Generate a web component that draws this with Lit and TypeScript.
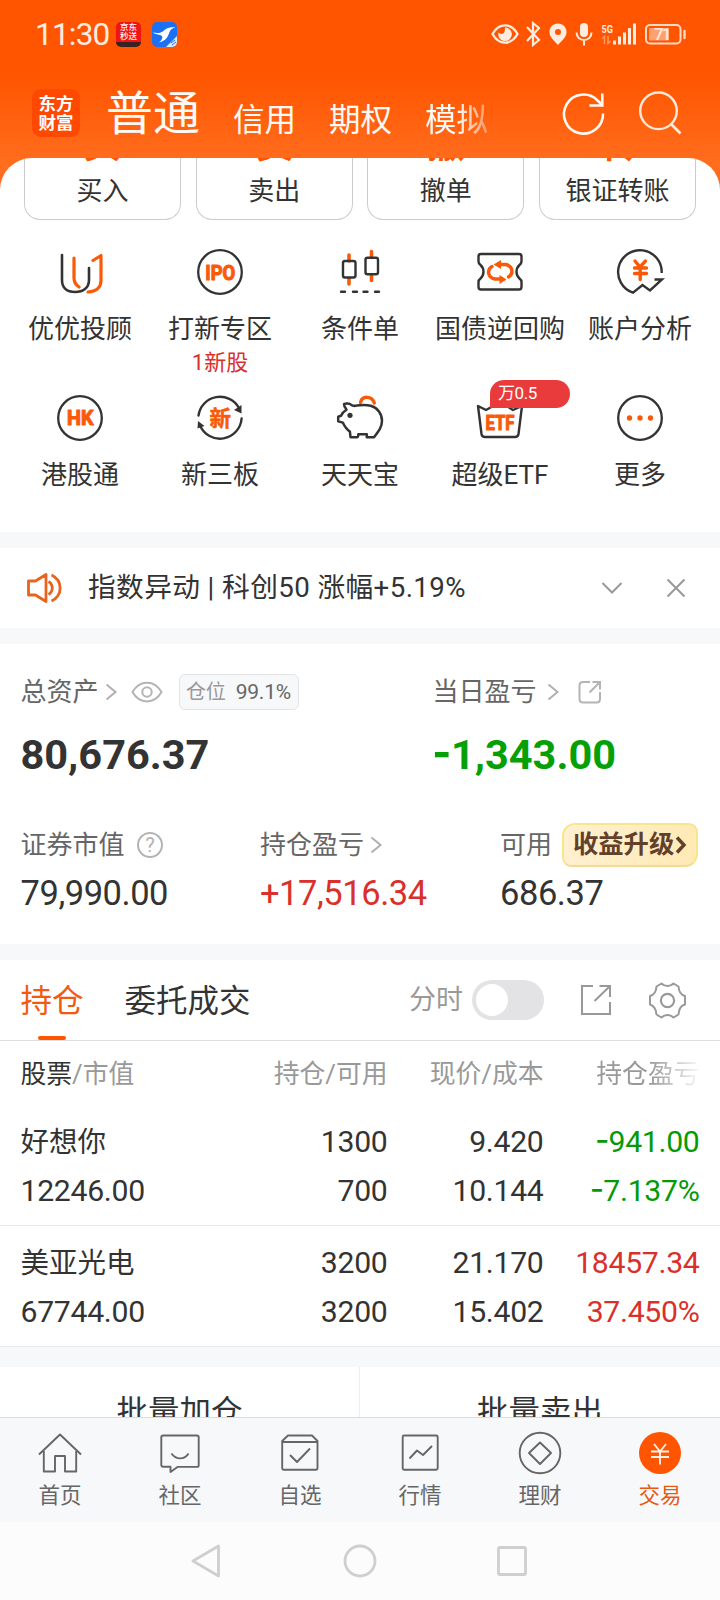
import { LitElement, html, svg, css } from "lit";
import { customElement } from "lit/decorators.js";

const icon = (w: number, h: number, body: unknown) =>
  html`<svg class="ic" width=${w} height=${h} viewBox="0 0 ${w} ${h}" fill="none">${body}</svg>`;

const D = "#333";
const O = "#fa5a08";
const G = "#999";

// Feature icons share a 50x50 canvas centred on (25,25).
const feature: Record<string, unknown> = {
  uu: svg`<g stroke-width="2.6" stroke-linecap="round" stroke-linejoin="round">
    <path stroke=${D} d="M7 8v25c0 8 5 12 13 12s14-4 14-12V21"/>
    <path stroke=${O} stroke-width="3.2" d="M19 11v20c0 4 2 7 5 9M38 13.5l8-5v25c0 7-5 11-13 11.5"/></g>`,
  ipo: svg`<circle cx="25" cy="25" r="21.8" stroke=${D} stroke-width="2.3"/>
    <text class="ib" x="25.3" y="32.5" font-size="20.5" textLength="30" lengthAdjust="spacingAndGlyphs">IPO</text>`,
  cond: svg`<path stroke=${O} stroke-width="3.6" stroke-linecap="round" d="M14 8v6M14 32v5M36.5 4.5v6M36.5 29v4.5"/>
    <g stroke=${D} stroke-width="2.4"><rect x="8" y="14" width="12.5" height="16.5" rx="2"/><rect x="30.5" y="10.8" width="12.5" height="16.5" rx="2"/>
    <path stroke-linecap="round" d="M6 44.8h4M18 44.8h4M28.5 44.8h4M40 44.8h4"/></g>`,
  bond: svg`<path stroke=${D} stroke-width="2.4" stroke-linejoin="round" d="M6 7h38q2.5 0 2.5 2.5v5q0 2-2 3.500c-4 3.500-4 10 0 13.500q2 1.500 2 3.500v5q0 2.500-2.500 2.500H6q-2.500 0-2.500-2.500v-5q0-2 2-3.500c4-3.500 4-10 0-13.500q-2-1.500-2-3.500v-5Q3.500 7 6 7z"/>
    <path stroke=${O} stroke-width="3.4" stroke-linecap="round" d="M17 19.500c-5 3-5 11 3 12.500h7M33.500 30c5-3 5-11-3-12.500h-6"/>
    <path fill=${O} d="M18.500 17.500l7.500-4.500v9zM31.500 32.500L24.500 28v9z"/>`,
  acct: svg`<path stroke=${D} stroke-width="2.4" stroke-linejoin="miter" d="M46.700 26A21.800 21.800 0 1 0 18 45.700L27.500 38l7.500 5.500L47 32.500h-7.500"/>
    <path stroke=${O} stroke-width="3.4" stroke-linecap="round" d="M20 14l5 6 5.500-6M25.200 20v12.500M19.500 21h12M19.500 26.500h12"/>`,
  hk: svg`<circle cx="25" cy="25" r="21.8" stroke=${D} stroke-width="2.3"/>
    <text class="ib" x="25.3" y="32.3" font-size="20" textLength="26.5" lengthAdjust="spacingAndGlyphs">HK</text>`,
  neeq: svg`<path stroke=${D} stroke-width="2.4" stroke-linecap="round" d="M3.500 22.500A21.700 21.700 0 0 1 44 15M46.600 25.500A21.700 21.700 0 0 1 5 32.500"/>
    <path fill=${D} d="M46.500 12v8.500l-7.500-3.500zM3 28l6.500 5L2.500 35.500z"/>
    <text class="ib cj" x="25.3" y="32.5" font-size="21.5">新</text>`,
  pig: svg`<path stroke=${O} stroke-width="3.4" stroke-linecap="round" d="M25.500 9.500c1.500-7 11.500-7 13.800.6"/>
    <path stroke=${D} stroke-width="2.500" stroke-linejoin="round" d="M9 11c2-1 5.500-.7 7 .7 1.500 1.300 3.500 1.400 5.700.9 4-.8 10-.9 14 .2 7 2 11.300 8 11.300 15 0 6-3 10-8 16.400h-7.200v-3h-8.500c0 2-.2 3-1.500 3h-6.300l-.6-5.600c-3-2-5.500-5.500-7.100-9l-4.600-1.300v-4.600l2.800-1c1.200-3 3-4.500 5.500-6-1.500-1.600-2.500-3.500-2.500-5.700z"/>
    <circle cx="15" cy="22.300" r="2.600" fill=${D}/>`,
  etf: svg`<path stroke=${D} stroke-width="2.4" stroke-linejoin="round" stroke-linecap="round" d="M15.500 14.500L11 17l-8-4 3.500 28q.5 3 3.500 3h30q3 0 3.500-3L47 13l-9 4-4-2.500"/>
    <text class="ib" x="25" y="36.700" font-size="20" textLength="29" lengthAdjust="spacingAndGlyphs">ETF</text>`,
  more: svg`<circle cx="25" cy="25" r="21.8" stroke=${D} stroke-width="2.3"/>
    <g fill=${O}><circle cx="14.5" cy="25" r="2.7"/><circle cx="25" cy="25" r="2.7"/><circle cx="35.5" cy="25" r="2.7"/></g>`,
};

const features = [
  ["uu", "优优投顾"], ["ipo", "打新专区", "1新股"], ["cond", "条件单"], ["bond", "国债逆回购"], ["acct", "账户分析"],
  ["hk", "港股通"], ["neeq", "新三板"], ["pig", "天天宝"], ["etf", "超级ETF", "", "万0.5"], ["more", "更多"],
];

const trades = [["买", "买入"], ["卖", "卖出"], ["撤", "撤单"], ["转", "银证转账"]];

const holdings = [
  { cls: "down", cells: [["好想你", "12246.00"], ["1300", "700"], ["9.420", "10.144"], ["-941.00", "-7.137%"]] },
  { cls: "up", cells: [["美亚光电", "67744.00"], ["3200", "3200"], ["21.170", "15.402"], ["18457.34", "37.450%"]] },
];

// Bottom navigation icons on a 44x44 canvas.
const tabs: [string, unknown][] = [
  ["首页", svg`<path d="M1 22.500L22 2.500l21 20M5.800 19v20.500H17V24h10v15.500h11.200V19"/>`],
  ["社区", svg`<path d="M5 3.500h34q1.700 0 1.700 1.700v28q0 1.700-1.700 1.700H19.500L12.500 40v-5.200H5q-1.700 0-1.700-1.700V5.200Q3.300 3.500 5 3.500zM13.500 21.500c4.500 6.500 13 6.500 17 0"/>`],
  ["自选", svg`<path d="M10 3.500h24l5.500 5.500v27q0 1.800-1.800 1.800H6Q4.200 37.800 4.200 36V9zM4.500 10h35M12 23l7 7 13-13.500"/>`],
  ["行情", svg`<rect x="4.700" y="3.500" width="35" height="34.300" rx="1.500"/><path d="M11.500 26.500l7.500-8 6 4.500 9-9"/>`],
  ["理财", svg`<circle cx="22" cy="21" r="20.300"/><path d="M22 10.500L33 21 22 32 11 21z"/>`],
  ["交易", svg`<circle cx="22" cy="21" r="21" fill="#ff5500" stroke="none"/><path stroke="#fff0e8" d="M16 12l6 7.500 6-7.500M22 19.500v13M13 19.500h18M13 25h18"/>`],
];

const sign = (t: string) => (t.startsWith("-") ? html`<i class="neg">-</i>${t.slice(1)}` : t);

const chevron = (cls: string) =>
  html`<span class=${cls}>${icon(12, 18, svg`<path stroke="#b0b0b0" stroke-width="2" d="M1.500 1.500L10.500 9l-9 7.500"/>`)}</span>`;

@customElement("app-root")
export class AppRoot extends LitElement {
  static styles = css`
    :host { display: block; width: 720px; height: 1600px; overflow: hidden; }
    * { box-sizing: border-box; }
    .app {
      height: 1600px; display: flex; flex-direction: column; color: #333; overflow: hidden; white-space: nowrap;
      font-family: Roboto, "Noto Sans CJK SC", sans-serif;
      background: linear-gradient(#ff5500 0, #ff5500 76px, #ff6c1c 158px, #ff7022 200px);
    }
    .ic { display: block; flex: none; overflow: visible; }
    .ib { font-family: Roboto, sans-serif; font-weight: 700; fill: #fa5a08; stroke: #fa5a08; stroke-width: 1.1px; stroke-linejoin: round; text-anchor: middle; }
    .ib.cj { font-family: "Noto Sans CJK SC", sans-serif; stroke-width: 0.5px; }

    .status { height: 68px; flex: none; display: flex; align-items: center; padding: 0 33px 0 35px; color: #ffece0; }
    .clock { font-size: 31.5px; line-height: 36px; letter-spacing: -0.8px; width: 81px; padding-top: 1px; }
    .chip { width: 25px; height: 25px; border-radius: 5px; overflow: hidden; }
    .jd { background: #f01414; color: #fff; font-size: 8.5px; line-height: 8.500px; text-align: center; font-weight: 500; padding-top: 1.5px; margin-right: 11px; border-bottom: 5px solid #3b2222; }
    .sys { margin-left: auto; }
    .st { font: 700 11.5px Roboto, sans-serif; fill: #ffece0; }
    .st.bat { font-size: 17px; font-weight: 500; }

    .head { height: 90px; flex: none; display: flex; align-items: center; padding-left: 32px; color: #fffaf5; }
    .logo { width: 48px; height: 48px; border-radius: 9px; background: #ff4800; color: #fff; font: 700 17.5px/19.5px "Noto Sans CJK SC", sans-serif; text-align: center; padding-top: 3.500px; margin-right: 26px; }
    .modes { display: flex; align-items: center; gap: 33px; font-size: 31.5px; line-height: 40px; width: 451px; }
    .modes b { font-size: 47px; font-weight: 400; line-height: 60px; padding-top: 2px; }
    .modes span { padding-top: 15px; }
    .fade { -webkit-mask-image: linear-gradient(90deg, #000 52%, rgba(0,0,0,.35) 100%); mask-image: linear-gradient(90deg, #000 52%, rgba(0,0,0,.35) 100%); }
    .acts { display: flex; gap: 31px; padding-left: 5px; }

    .sheet { background: #fff; border-radius: 32px 32px 0 0; height: 374px; flex: none; overflow: hidden; }
    .trades { display: grid; grid-template-columns: repeat(4, 157px); justify-content: space-between; padding: 0 24px; height: 62px; }
    .trade { height: 62px; border: 1.5px solid #ccc; border-top: 0; border-radius: 0 0 16px 16px; overflow: hidden; font-size: 26px; display: flex; flex-direction: column; justify-content: flex-end; align-items: center; line-height: 30px; padding-bottom: 13px; }
    .trade b { color: #ff5500; font-size: 38px; line-height: 44px; margin-bottom: 10px; }
    .grid { display: grid; grid-template-columns: repeat(5, 140px); grid-auto-rows: 146px; padding: 27px 10px 0; }
    .feat { display: flex; flex-direction: column; align-items: center; position: relative; font-size: 26px; line-height: 32px; }
    .feat .ic { margin-bottom: 16px; }
    .sub { font-size: 22px; line-height: 26px; margin-top: 5px; color: #d9302c; }
    .badge { position: absolute; left: 60px; top: -13px; width: 80px; height: 28px; border-radius: 14px 14px 14px 0; background: #ea3b3c; color: #fff; font-size: 17px; line-height: 27px; padding-left: 8px; letter-spacing: -0.4px; }

    .gap { height: 16px; flex: none; background: #f7f8fa; }
    .notice { height: 80px; flex: none; background: #fff; display: flex; align-items: center; padding: 0 34px 0 26px; }
    .notice p { margin: 0 auto 0 26px; font-size: 27.7px; line-height: 36px; letter-spacing: 0.4px; }
    .notice .x { margin-left: 43px; }

    .assets { height: 300px; flex: none; background: #fff; padding-left: 20.5px; color: #666; font-size: 26px; }
    .two { display: grid; grid-template-columns: 412px 1fr; padding-top: 26px; }
    .three { display: grid; grid-template-columns: 239.5px 240px 1fr; padding-top: 43px; }
    .lab { display: flex; align-items: center; height: 44px; line-height: 44px; }
    .two .big { font-size: 41.5px; font-weight: 700; color: #333; line-height: 50px; margin-top: 16px; }
    .val { font-size: 34.5px; color: #333; line-height: 40px; margin-top: 6px; letter-spacing: -0.45px; }
    .neg { font-family: "Noto Sans CJK SC", sans-serif; font-style: normal; font-size: 1.28em; line-height: 0; }
    .big .neg { font-size: 1.2em; }
    .down { color: #059a05; }
    .two .big.down { color: #05a005; }
    .up { color: #d9302c; }
    .c1 { margin-left: 6px; } .c2 { margin-left: 10px; }
    .eye { margin-left: 14px; } .out { margin-left: 19px; }
    .tag { margin-left: 16px; width: 120px; height: 36px; line-height: 34px; border: 1.5px solid #e4e4e6; border-radius: 6px; background: #f7f8fa; font-size: 20px; display: flex; align-items: center; justify-content: center; gap: 10px; color: #999; letter-spacing: -0.2px; }
    .tag span { color: #666; font-size: 21px; }
    .q { margin-left: 12px; }
    .qt { font: 20px Roboto, sans-serif; fill: #b4b4b4; text-anchor: middle; }
    .promo { margin-left: 10px; width: 136px; height: 44px; border-radius: 13px 9px 13px 9px; border: 2px solid #f9e58a; border-bottom-color: #f5da95; background: linear-gradient(100deg, #fff0d2, #ffeab4); color: #63402a; font-weight: 700; font-size: 25.3px; line-height: 40px; display: flex; align-items: center; padding-left: 9px; gap: 1px; }

    .bar { height: 81px; flex: none; background: #fff; border-bottom: 1.5px solid #dedede; display: flex; align-items: center; padding: 0 34px 0 20.5px; font-size: 31.5px; }
    .tab { height: 80px; line-height: 83px; margin-right: 41px; }
    .tab.on { color: #f25a10; display: flex; flex-direction: column; align-items: center; line-height: 83px; }
    .tab.on::after { content: ""; width: 28px; height: 4px; border-radius: 2px; background: #ff5500; margin-top: -7px; }
    .min { margin-left: auto; font-size: 27px; line-height: 40px; color: #999; }
    .switch { width: 72px; height: 40px; border-radius: 20px; background: #e3e3e5; padding: 4px; margin: 0 36px 0 9px; }
    .knob { width: 32px; height: 32px; border-radius: 50%; background: #fff; }
    .gear { margin-left: 37px; }

    .row { display: grid; grid-template-columns: 201px 166px 156px 156px; padding-left: 20.5px; background: #fff; flex: none; text-align: right; }
    .row > :first-child { text-align: left; }
    .th { height: 64px; line-height: 66px; font-size: 25.8px; color: #999; }
    .th em { color: #333; font-style: normal; }
    .fade2 { -webkit-mask-image: linear-gradient(90deg, #000 68%, transparent 102%); mask-image: linear-gradient(90deg, #000 68%, transparent 102%); }
    .td { height: 121px; border-bottom: 1px solid #e9e9eb; font-size: 30.2px; padding-top: 13px; line-height: 48.5px; letter-spacing: -0.3px; }
    .name { font-size: 28.5px; letter-spacing: 0; height: 48.5px; padding-top: 1px; }
    .gap2 { height: 20px; flex: none; background: #f7f8fa; }
    .batch { height: 50px; flex: none; background: #fff; display: grid; grid-template-columns: 1fr 1fr; overflow: hidden; font-size: 31.5px; line-height: 92px; text-align: center; }
    .batch > :first-child { border-right: 1px solid #eee; }
    .nav { height: 105px; flex: none; background: #f7f8fa; border-top: 1px solid #dcdcdc; display: grid; grid-template-columns: repeat(6, 120px); color: #666; font-size: 21.5px; }
    .nav div { display: flex; flex-direction: column; align-items: center; padding-top: 14px; line-height: 26px; gap: 7px; }
    .nav .ic { stroke: #666; stroke-width: 1.9; stroke-linejoin: round; }
    .nav .act { color: #e8590f; }
    .soft { flex: 1; background: #fcfcfc; display: flex; align-items: center; justify-content: center; gap: 122px; padding-right: 3px; }
    .soft > :last-child { margin-left: -2px; }
  `;

  render() {
    return html`<div class="app">
      <div class="status">
        <span class="clock">11:30</span>
        <div class="chip jd">京东<br />秒送</div>
        <div class="chip">${icon(25, 25, svg`<rect width="25" height="25" fill="#1b70f5"/><path fill="#fff" d="M.5 10.500c5 .8 8 1 11.500-2C15 5.500 19 5 23.500 5.500c-3 .8-5 1.500-6 4.500C16 14.500 14 19 7 20.500c3-2.500 4-4.500 3-6.500-2-1.500-6-1.500-9.500-3.500z"/><path fill="#dce9ff" d="M25 14v11H14z"/><path stroke="#1b70f5" d="M19 21l4-3M20 23l4-3"/>`)}</div>
        <div class="sys">${icon(196, 28, svg`
          <path stroke="#ffece0" stroke-width="2.400" d="M1.500 14C8 2.500 20 2.500 26.500 14 20 25.500 8 25.500 1.500 14z"/>
          <path fill="#ffece0" d="M14 7.500a6.800 6.800 0 1 1-6.500 5c1.500 2 5 2 6-.5.600-2 .500-3.500.500-4.500z"/>
          <path stroke="#ffece0" stroke-width="2.200" d="M36 7l12 13-6 5V3l6 5-12 13"/>
          <path fill="#ffece0" fill-rule="evenodd" d="M67 3.500c-5 0-8.500 3.700-8.500 8.500 0 5.500 5 9 8.500 13 3.500-4 8.500-7.500 8.500-13 0-4.800-3.500-8.500-8.500-8.500zm0 5.500a3 3 0 1 0 0 6 3 3 0 0 0 0-6z"/>
          <rect x="89" y="3" width="8" height="14" rx="4" fill="#ffece0"/>
          <path stroke="#ffece0" stroke-width="2" d="M85.500 12.500c0 10 15 10 15 0M93 20v5.500"/>
          <text class="st" x="110.500" y="12.500" textLength="11.500" lengthAdjust="spacingAndGlyphs">5G</text>
          <path stroke="#ff9a63" stroke-width="1.500" d="M111 18.500l2.500-2v7.500M117 16v7.500l2.500-2.500"/>
          <path stroke="#ffece0" stroke-width="3" d="M123.500 20.500v4M128.500 16.500v8M133.500 12.500v12M138.500 8v16.500M143.500 3.500v21"/>
          <rect x="155" y="5" width="34.500" height="18.500" rx="4" stroke="#ffd9c4" stroke-width="2"/>
          <rect x="158" y="8" width="20" height="12.500" rx="1" fill="#ffa070"/>
          <path stroke="#ffd9c4" stroke-width="2.400" stroke-linecap="round" d="M193.500 11v7"/>
          <text class="st bat" x="163" y="20.300" textLength="17.500">71</text>`)}</div>
      </div>
      <div class="head">
        <div class="logo">东方<br />财富</div>
        <div class="modes"><b>普通</b><span>信用</span><span>期权</span><span class="fade">模拟</span></div>
        <div class="acts">
          ${icon(44, 44, svg`<path stroke="#fffaf5" stroke-width="2.600" d="M41 22.500A19.500 19.500 0 1 1 35.500 9.500l4.500 4M40.300 2.500v12H27.500"/>`)}
          ${icon(44, 44, svg`<circle cx="21.500" cy="19.800" r="18.300" stroke="#ffe9d8" stroke-width="2.400"/><path stroke="#ffe9d8" stroke-width="2.600" d="M34 33l9.500 9.500"/>`)}
        </div>
      </div>

      <div class="sheet">
        <div class="trades">${trades.map(([g, t]) => html`<div class="trade"><b>${g}</b><span>${t}</span></div>`)}</div>
        <div class="grid">${features.map(([k, t, sub, badge]) => html`<div class="feat">
          ${icon(50, 50, feature[k])}<span>${t}</span>
          ${sub ? html`<span class="sub">${sub}</span>` : ""}${badge ? html`<span class="badge">${badge}</span>` : ""}
        </div>`)}</div>
      </div>
      <div class="gap"></div>
      <div class="notice">
        ${icon(36, 32, svg`<g stroke="#e8641c" stroke-width="2.800" stroke-linejoin="round"><path d="M2.500 9h7L20 2.500v27L9.500 23h-7zM22.500 9.500c5 3 5 10 0 13M25.500 3c11.500 5.500 11.500 20.500 0 26"/></g>`)}
        <p>指数异动 | 科创50 涨幅+5.19%</p>
        ${icon(22, 14, svg`<path stroke=${G} stroke-width="2" d="M1.500 2L11 11.500 20.500 2"/>`)}
        <span class="x">${icon(20, 20, svg`<path stroke=${G} stroke-width="2" d="M1.500 1.500l17 17M18.500 1.500l-17 17"/>`)}</span>
      </div>
      <div class="gap"></div>

      <div class="assets">
        <div class="two">
          <div>
            <div class="lab">总资产${chevron("c1")}
              <span class="eye">${icon(32, 22, svg`<path stroke="#b4b4b4" stroke-width="2" d="M1.500 11C8.500-1.500 23.500-1.500 30.500 11 23.500 23.500 8.500 23.500 1.500 11z"/><circle cx="16" cy="11" r="4.700" stroke="#b4b4b4" stroke-width="2"/>`)}</span>
              <div class="tag">仓位<span>99.1%</span></div>
            </div>
            <div class="big">80,676.37</div>
          </div>
          <div>
            <div class="lab">当日盈亏${chevron("c2")}
              <span class="out">${icon(24, 24, svg`<path stroke="#b4b4b4" stroke-width="2" d="M12 2H5Q1.500 2 1.500 5.500V19q0 3.500 3.500 3.500h13.500q3.500 0 3.500-3.500v-7M11.500 12.500L22 2M14.500 2H22v7.500"/>`)}</span>
            </div>
            <div class="big down">${sign("-1,343.00")}</div>
          </div>
        </div>
        <div class="three">
          <div><div class="lab">证券市值<span class="q">${icon(26, 26, svg`<circle cx="13" cy="13" r="12" stroke="#b4b4b4" stroke-width="2"/><text class="qt" x="13" y="20">?</text>`)}</span></div><div class="val">79,990.00</div></div>
          <div><div class="lab">持仓盈亏${chevron("c1")}</div><div class="val up">+17,516.34</div></div>
          <div><div class="lab">可用<span class="promo">收益升级${icon(12, 18, svg`<path stroke="#63402a" stroke-width="3.400" d="M2 1.500L9 9l-7 7.500"/>`)}</span></div><div class="val">686.37</div></div>
        </div>
      </div>
      <div class="gap"></div>

      <div class="bar">
        <span class="tab on">持仓</span><span class="tab">委托成交</span>
        <span class="min">分时</span><div class="switch"><div class="knob"></div></div>
        ${icon(32, 32, svg`<path stroke=${G} stroke-width="2" d="M13 2H2v28h28V18M14.500 17L30 2M19.500 2H30v11"/>`)}
        <span class="gear">${icon(37, 37, svg`<path stroke=${G} stroke-width="2" stroke-linejoin="round" d="M12.500 1.500q2.500 2.500 6 2.500t6-2.500l5 3q.5 8 6.500 9.500v8.500q-6 1.500-6.500 10l-5 3q-2.500-2.500-6-2.500t-6 2.500l-5-3Q7 24.500 1 22.500v-8.500Q7 12.500 7.500 4.500z"/><circle cx="18.500" cy="18.500" r="6.600" stroke=${G} stroke-width="2.200"/>`)}</span>
      </div>
      <div class="row th"><span><em>股票</em>/市值</span><span>持仓/可用</span><span>现价/成本</span><span class="fade2">持仓盈亏</span></div>
      ${holdings.map((h) => html`<div class="row td">${h.cells.map((c, i) => html`<div class=${i === 3 ? h.cls : ""}>
        <div class=${i === 0 ? "name" : ""}>${sign(c[0])}</div><div>${sign(c[1])}</div></div>`)}</div>`)}
      <div class="gap2"></div>
      <div class="batch"><div>批量加仓</div><div>批量卖出</div></div>

      <div class="nav">${tabs.map(([t, g], i) => html`<div class=${i === 5 ? "act" : ""}>${icon(44, 44, g)}<span>${t}</span></div>`)}</div>
      <div class="soft">
        ${icon(30, 34, svg`<path stroke="#cfcfcf" stroke-width="2.800" stroke-linejoin="round" d="M27.500 2v30L2 17z"/>`)}
        ${icon(34, 34, svg`<circle cx="17" cy="17" r="15" stroke="#cfcfcf" stroke-width="2.800"/>`)}
        ${icon(30, 30, svg`<rect x="1.500" y="1.500" width="27" height="27" rx="1.500" stroke="#cfcfcf" stroke-width="2.800"/>`)}
      </div>
    </div>`;
  }
}
